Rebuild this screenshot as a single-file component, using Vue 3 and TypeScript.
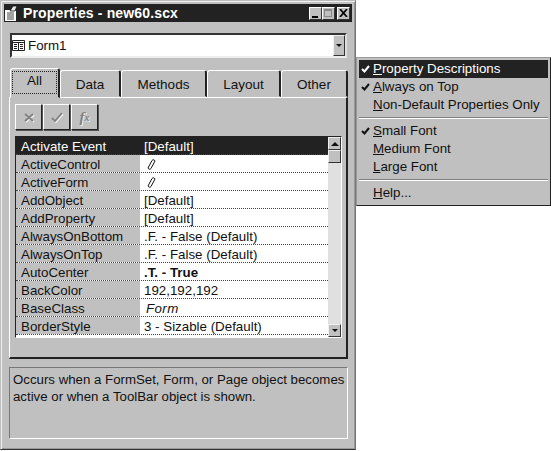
<template>
  <div class="screen">
    <section class="window">
      <header class="titlebar">
        <svg class="app-icon" width="16" height="18" viewBox="0 0 16 18">
          <path d="M1 6h10l1 1v10H1z" fill="#fff" />
          <path d="M3 9h7M3 11h7M3 13h7M3 15h7" stroke="#444" stroke-width="1" />
          <path d="M6 7l3-5h4l-2 5z" fill="#e8e8e8" stroke="#111" stroke-width="0.8" />
        </svg>
        <span class="title">Properties - new60.scx</span>
        <div class="caption-buttons">
          <button class="cap"><i class="glyph-min"></i></button>
          <button class="cap"><i class="glyph-max"></i></button>
          <button class="cap close">
            <svg width="9" height="8" viewBox="0 0 9 8"><path d="M1 0l7 8M8 0L1 8" stroke="#000" stroke-width="1.7" /></svg>
          </button>
        </div>
      </header>

      <div class="combo">
        <svg class="form-icon" width="13" height="11" viewBox="0 0 13 11">
          <path d="M.5.5h12v10H.5z" fill="#fff" stroke="#222" />
          <path d="M.5 2.500h12M6.500 2.500v8M2 4.500h3M2 6.500h3M2 8.500h3M8 4.500h3M8 6.500h3M8 8.500h3" stroke="#222" fill="none" />
        </svg>
        <span class="combo-text">Form1</span>
        <span class="combo-btn"><i class="arrow-down"></i></span>
      </div>

      <nav class="tabs">
        <div
          v-for="tab in tabs"
          :key="tab.name"
          class="tab"
          :class="{ active: tab.name === 'All' }"
          :style="{ width: tab.width + 'px' }"
        >
          <span class="tab-label">{{ tab.name }}</span>
        </div>
      </nav>

      <div class="page">
        <div class="tools">
          <button class="tool">
            <svg width="10" height="9" viewBox="0 0 10 9"><path d="M1 1l8 7M9 1L1 8" stroke="#808080" stroke-width="1.8" /></svg>
          </button>
          <button class="tool">
            <svg width="12" height="10" viewBox="0 0 12 10"><path d="M1 6l3 3 7-8" fill="none" stroke="#808080" stroke-width="1.8" /></svg>
          </button>
          <button class="tool fx">f<small>x</small></button>
        </div>

        <div class="grid">
          <div class="rows">
            <div v-for="(row, i) in rows" :key="row.name" class="row" :class="{ selected: i === 0 }">
              <span class="name">{{ row.name }}</span>
              <span class="value" :class="row.kind">
                <svg v-if="row.kind === 'pencil'" width="9" height="11" viewBox="0 0 9 11">
                  <path d="M5 1.500Q5.500.8 6.500.8T8 2L4 9.500Q3.500 10.300 2.500 10.200T1 9z" fill="#fff" stroke="#111" stroke-width="1" />
                </svg>
                <template v-else>{{ row.value }}</template>
              </span>
            </div>
          </div>
          <div class="scrollbar">
            <span class="sb-btn"><i class="arrow-up"></i></span>
            <span class="sb-thumb"></span>
            <span class="sb-track"></span>
            <span class="sb-btn"><i class="arrow-down"></i></span>
          </div>
        </div>
      </div>

      <div class="description">
        Occurs when a FormSet, Form, or Page object becomes active or when a ToolBar object is shown.
      </div>
    </section>

    <ul class="menu">
      <template v-for="(item, i) in menu" :key="i">
        <li v-if="item.sep" class="sep"></li>
        <li v-else class="item" :class="{ hot: item.hot }">
          <svg v-if="item.checked" class="check" width="9" height="8" viewBox="0 0 9 8">
            <path d="M1 4l2.500 2.500L8 1" fill="none" stroke="currentColor" stroke-width="2" />
          </svg>
          <span class="item-label"><u>{{ item.key }}</u>{{ item.rest }}</span>
        </li>
      </template>
    </ul>
  </div>
</template>

<script setup lang="ts">
interface Row {
  name: string
  value?: string
  kind?: string
}

interface MenuItem {
  key?: string
  rest?: string
  checked?: boolean
  hot?: boolean
  sep?: boolean
}

const tabs = [
  { name: 'All', width: 50 },
  { name: 'Data', width: 61 },
  { name: 'Methods', width: 86 },
  { name: 'Layout', width: 74 },
  { name: 'Other', width: 67 },
]

const rows: Row[] = [
  { name: 'Activate Event', value: '[Default]' },
  { name: 'ActiveControl', kind: 'pencil' },
  { name: 'ActiveForm', kind: 'pencil' },
  { name: 'AddObject', value: '[Default]' },
  { name: 'AddProperty', value: '[Default]' },
  { name: 'AlwaysOnBottom', value: '.F. - False (Default)' },
  { name: 'AlwaysOnTop', value: '.F. - False (Default)' },
  { name: 'AutoCenter', value: '.T. - True', kind: 'bold' },
  { name: 'BackColor', value: '192,192,192' },
  { name: 'BaseClass', value: 'Form', kind: 'italic' },
  { name: 'BorderStyle', value: '3 - Sizable (Default)' },
]

const menu: MenuItem[] = [
  { key: 'P', rest: 'roperty Descriptions', checked: true, hot: true },
  { key: 'A', rest: 'lways on Top', checked: true },
  { key: 'N', rest: 'on-Default Properties Only' },
  { sep: true },
  { key: 'S', rest: 'mall Font', checked: true },
  { key: 'M', rest: 'edium Font' },
  { key: 'L', rest: 'arge Font' },
  { sep: true },
  { key: 'H', rest: 'elp...' },
]
</script>

<style scoped>
.screen {
  position: relative;
  width: 551px;
  height: 451px;
  background: #fff;
  overflow: hidden;
  font-family: "Liberation Sans", Arial, sans-serif;
  font-size: 13.33px;
  color: #111;
}

.window {
  box-sizing: border-box;
  width: 356px;
  height: 450px;
  padding: 3px 3px 0;
  background: #c0c0c0;
  border: 1px solid;
  border-color: #bdbdbd #777 #333 #bdbdbd;
  box-shadow: inset 1px 1px 0 #f0f0f0, inset -1px -1px 0 #999;
  display: flex;
  flex-direction: column;
}

.titlebar {
  height: 18px;
  background: #222;
  display: flex;
  align-items: center;
  flex: none;
}

.app-icon {
  flex: none;
}

.title {
  margin-left: 3px;
  color: #fff;
  font-size: 14px;
  font-weight: 700;
  letter-spacing: 0.15px;
  white-space: nowrap;
}

.caption-buttons {
  margin-left: auto;
  margin-right: 2px;
  display: flex;
}

.cap {
  box-sizing: border-box;
  width: 13px;
  height: 13px;
  margin: 0;
  padding: 0;
  background: #c0c0c0;
  border: 1px solid;
  border-color: #fff #333 #333 #fff;
  position: relative;
  display: block;
}

.cap.close {
  margin-left: 2px;
  display: flex;
  align-items: center;
  justify-content: center;
}

.glyph-min {
  position: absolute;
  left: 2px;
  bottom: 1px;
  width: 6px;
  height: 2px;
  background: #000;
}

.glyph-max {
  position: absolute;
  left: 1px;
  top: 1px;
  width: 8px;
  height: 8px;
  box-sizing: border-box;
  border: 1px solid #888;
  border-top-width: 2px;
}

.combo {
  box-sizing: border-box;
  margin: 11px 5px 0 6px;
  height: 25px;
  flex: none;
  display: flex;
  align-items: center;
  background: #fff;
  border: 2px solid;
  border-color: #333 #ddd #eee #333;
  padding-left: 0;
}

.form-icon {
  flex: none;
}

.combo-text {
  margin-left: 3px;
}

.combo-btn {
  margin-left: auto;
  width: 12px;
  height: 21px;
  box-sizing: border-box;
  background: #c0c0c0;
  border: 1px solid;
  border-color: #eee #333 #333 #eee;
  display: flex;
  align-items: center;
  justify-content: center;
}

.arrow-down {
  width: 0;
  height: 0;
  border: 3px solid transparent;
  border-bottom: 0;
  border-top-color: #111;
}

.arrow-up {
  width: 0;
  height: 0;
  border: 4px solid transparent;
  border-top: 0;
  border-bottom-color: #111;
}

.tabs {
  display: flex;
  align-items: flex-end;
  height: 29px;
  margin: 10px 0 0 6px;
  flex: none;
  position: relative;
  z-index: 1;
}

.tab {
  box-sizing: border-box;
  height: 27px;
  border: 1px solid;
  border-color: #fff #222 transparent #fff;
  border-right-width: 2px;
  border-radius: 3px 3px 0 0;
  text-align: center;
  line-height: 28px;
  font-size: 13.5px;
}

.tab.active {
  height: 30px;
  margin-bottom: -1px;
  background: #c0c0c0;
  padding: 3px 2px 0;
  line-height: 18px;
}

.tab.active .tab-label {
  display: block;
  height: 21px;
  outline: 1px dotted #222;
}

.page {
  box-sizing: border-box;
  margin-left: 5px;
  margin-right: 4px;
  height: 262px;
  flex: none;
  border: 1px solid;
  border-color: #fff #222 #222 #fff;
  border-right-width: 2px;
  border-bottom-width: 2px;
  padding: 6px 5px 0;
}

.tools {
  display: flex;
  gap: 1px;
}

.tool {
  box-sizing: border-box;
  width: 27px;
  height: 26px;
  margin: 0;
  padding: 0;
  background: #c0c0c0;
  border: 1px solid;
  border-color: #fff #222 #222 #fff;
  box-shadow: 1px 1px 0 #555;
  display: flex;
  align-items: center;
  justify-content: center;
}

.tool svg {
  filter: drop-shadow(1px 1px 0 #eee);
}

.tool.fx {
  font-family: "Liberation Serif", serif;
  font-style: italic;
  font-weight: 700;
  font-size: 15px;
  color: #808080;
  text-shadow: 1px 1px 0 #eee;
}

.tool.fx small {
  font-size: 10px;
}

.grid {
  box-sizing: border-box;
  margin-top: 6px;
  height: 202px;
  width: 327px;
  display: flex;
  border: 1px solid;
  border-color: #222 #fff #fff #222;
  background: #fff;
}

.rows {
  flex: 1;
  min-width: 0;
}

.row {
  box-sizing: border-box;
  display: flex;
  height: 18px;
  border-bottom: 1px dotted #444;
}

.name {
  box-sizing: border-box;
  width: 124px;
  height: 17px;
  padding-left: 5px;
  padding-top: 1px;
  line-height: 17px;
  background: #c0c0c0;
  white-space: nowrap;
  flex: none;
}

.value {
  box-sizing: border-box;
  height: 17px;
  padding-left: 4px;
  padding-top: 2px;
  flex: 1;
  white-space: nowrap;
  display: flex;
  align-items: center;
}

.value.bold {
  font-weight: 700;
}

.value.italic {
  font-style: italic;
  padding-left: 6px;
  letter-spacing: 0.4px;
}

.value.pencil {
  padding-left: 7px;
}

.row.selected,
.row.selected .name {
  background: #222;
  color: #fff;
}

.scrollbar {
  width: 13px;
  flex: none;
  display: flex;
  flex-direction: column;
  background: #e0e0e0;
}

.sb-btn,
.sb-thumb {
  box-sizing: border-box;
  width: 13px;
  height: 13px;
  flex: none;
  background: #c0c0c0;
  border: 1px solid;
  border-color: #eee #333 #333 #eee;
  display: flex;
  align-items: center;
  justify-content: center;
}

.sb-track {
  flex: 1;
}

.description {
  box-sizing: border-box;
  margin: 8px 4px 0 5px;
  height: 72px;
  flex: none;
  border: 1px solid;
  border-color: #777 #fff #fff #777;
  padding: 3px 2px 0 3px;
  line-height: 17px;
  font-size: 13.25px;
}

.menu {
  position: absolute;
  left: 356px;
  top: 57px;
  box-sizing: border-box;
  width: 195px;
  height: 149px;
  margin: 0;
  padding: 2px;
  list-style: none;
  background: #c0c0c0;
  border: 1px solid;
  border-color: #999 #222 #222 #999;
}

.item {
  position: relative;
  height: 18px;
  line-height: 18px;
  padding-left: 14px;
  white-space: nowrap;
}

.item.hot {
  background: #222;
  color: #fff;
}

.check {
  position: absolute;
  left: 2px;
  top: 5px;
}

.sep {
  height: 2px;
  margin: 3px 0;
  background: linear-gradient(#808080 50%, #fff 50%);
}
</style>
